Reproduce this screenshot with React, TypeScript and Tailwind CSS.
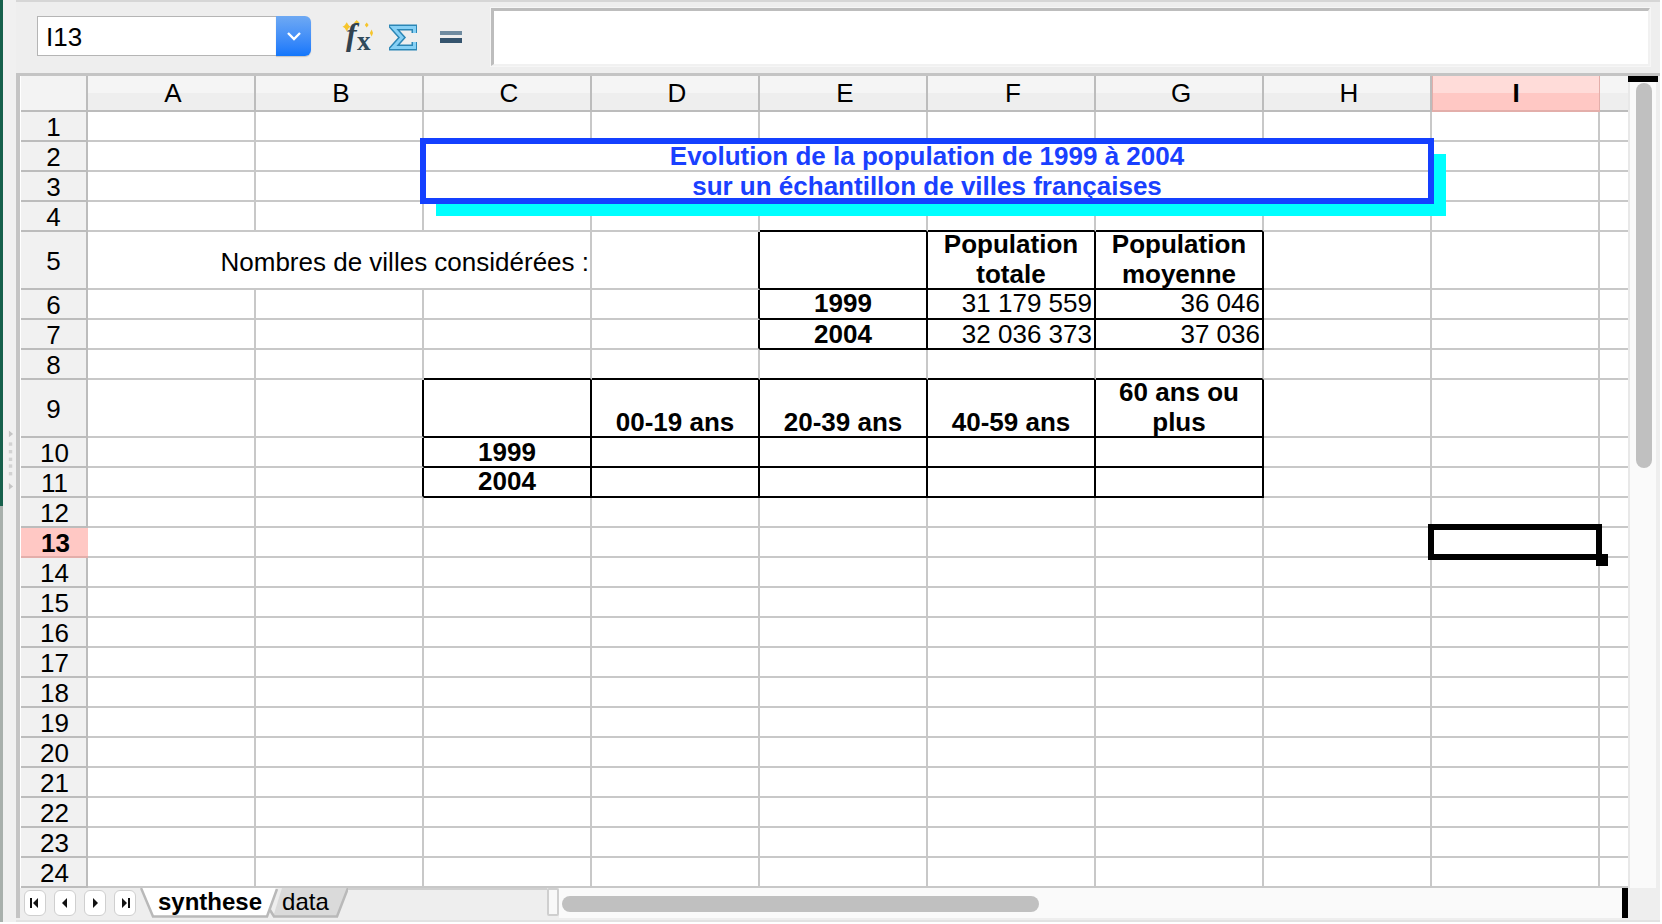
const COLUMNS = ["A", "B", "C", "D", "E", "F", "G", "H", "I"]
const ROWS = Array.from({ length: 24 }, (_, i) => i + 1)

type Cell = { text: string; align: "center" | "right" | "bottom"; bold?: boolean }

const CELLS: Record<string, Cell> = {
  F5: { text: "Population\ntotale", align: "center", bold: true },
  G5: { text: "Population\nmoyenne", align: "center", bold: true },
  E6: { text: "1999", align: "center", bold: true },
  F6: { text: "31 179 559", align: "right" },
  G6: { text: "36 046", align: "right" },
  E7: { text: "2004", align: "center", bold: true },
  F7: { text: "32 036 373", align: "right" },
  G7: { text: "37 036", align: "right" },
  D9: { text: "00-19 ans", align: "bottom", bold: true },
  E9: { text: "20-39 ans", align: "bottom", bold: true },
  F9: { text: "40-59 ans", align: "bottom", bold: true },
  G9: { text: "60 ans ou\nplus", align: "center", bold: true },
  C10: { text: "1999", align: "center", bold: true },
  C11: { text: "2004", align: "center", bold: true },
}

// the two black tables sit on the grid lines, so they are just cell borders
function rightBorder(col: number, row: number) {
  if (row >= 5 && row <= 7 && col >= 3 && col <= 6) return "border-r-black"
  if (row >= 9 && row <= 11 && col >= 1 && col <= 6) return "border-r-black"
  return "border-r-[#c8c8c8]"
}

function bottomBorder(col: number, row: number) {
  if (row >= 4 && row <= 7 && col >= 4 && col <= 6) return "border-b-black"
  if (row >= 8 && row <= 11 && col >= 2 && col <= 6) return "border-b-black"
  return "border-b-[#c8c8c8]"
}

function GridCell({ col, row }: { col: number; row: number }) {
  const cell = CELLS[COLUMNS[col] + row]
  const base = `border-r-2 border-b-2 bg-white text-black ${rightBorder(col, row)} ${bottomBorder(col, row)}`
  if (!cell) return <div className={base} />
  const place =
    cell.align === "right"
      ? "items-center justify-end pr-[2px]"
      : cell.align === "bottom"
      ? "items-end justify-center"
      : "items-center justify-center text-center"
  const nudge = cell.align !== "bottom" && (row === 5 || row === 6 || row === 9 || row === 11) ? "pb-[2px]" : ""
  const leading = cell.align === "bottom" ? "leading-[27px]" : "leading-[30px]"
  return (
    <div className={`${base} flex ${place} ${nudge} ${cell.bold ? "font-bold" : ""}`}>
      <span className={`whitespace-pre-line text-center ${leading}`}>{cell.text}</span>
    </div>
  )
}

function ColumnHeader({ label, selected }: { label: string; selected?: boolean }) {
  if (selected) {
    return (
      <div className="flex items-center justify-center border-x border-b-2 border-[#e3aeaa] bg-[linear-gradient(#ffdcd9_0_50%,#ffc8c4_50%)] font-bold text-black">
        {label}
      </div>
    )
  }
  return (
    <div className="flex items-center justify-center border-r-2 border-b-2 border-[#bcbcbc] bg-[linear-gradient(#f5f5f5_0_50%,#eeeeee_50%)] pl-[4px] text-black">
      {label}
    </div>
  )
}

function RowHeader({ row }: { row: number }) {
  const indent = row >= 10 ? "pl-[2px]" : ""
  if (row === 13) {
    return (
      <div className={`ml-px flex items-center justify-center border-b-2 border-[#e3aeaa] bg-[#ffc8c4] pt-[2px] font-bold text-black ${indent}`}>
        {row}
      </div>
    )
  }
  return (
    <div className={`ml-px flex items-center justify-center border-r-2 border-b-2 border-[#bcbcbc] bg-[#f1f1f1] pt-[2px] text-black ${indent}`}>
      {row}
    </div>
  )
}

function FxIcon() {
  return (
    <svg width="31" height="34" viewBox="0 0 31 34" className="mt-[12px] ml-[31px] shrink-0 overflow-visible">
      <g fill="#f6c52c">
        <path d="M4.7 2.2 7.5 6.7 4.7 11.2 1.9 6.7Z" />
        <path d="M0.5 6.7 4.7 4.6 8.9 6.7 4.7 8.8Z" />
        <path d="M14.7 0 16.7 2.3 14.7 4.8 12.7 2.3Z" />
        <path d="M11.8 2.3 14.7 1.3 17.6 2.3 14.7 3.4Z" />
        <path d="M24.7 2.5 26.6 5 24.7 7.5 22.8 5Z" />
        <path d="M29.7 9.5 31 13 29.7 16.5 27.8 13Z" />
      </g>
      <text x="4" y="25" fontFamily="Liberation Serif" fontStyle="italic" fontWeight="700" fontSize="32" fill="#31424f">
        f
      </text>
      <text x="15" y="30" fontFamily="Liberation Serif" fontWeight="700" fontSize="27" fill="#2f4a5c">
        x
      </text>
    </svg>
  )
}

function SigmaIcon() {
  const d = "M25.5 9V3.5H4L13 13.5 4 23.5H25.5V18"
  return (
    <svg width="28" height="27" viewBox="0 0 28 27" className="mt-[16px] ml-[16px] shrink-0">
      <path d={d} fill="none" stroke="#2b86b5" strokeWidth="6" />
      <path d={d} fill="none" stroke="#86d0f5" strokeWidth="3" />
    </svg>
  )
}

function EqualsIcon() {
  return (
    <svg width="22" height="12" viewBox="0 0 22 12" className="mt-[23px] ml-[23px] shrink-0">
      <rect x="0" y="0" width="22" height="4" fill="#6f8ba0" />
      <rect x="0" y="7" width="22" height="5" fill="#35546e" />
    </svg>
  )
}

function Toolbar() {
  return (
    <div className="flex h-[73px] items-start border-t-2 border-[#d6d6d6] bg-[#eeeeee] pt-[6px] pl-[21px]">
      <div className="mt-[8px] flex h-[40px] w-[274px] shrink-0">
        <div className="flex flex-1 items-center border border-r-0 border-[#b5b5b5] bg-white pt-[2px] pl-[8px] text-[26px] text-black">
          I13
        </div>
        <div className="flex w-[35px] items-center justify-center rounded-r-[6px] bg-gradient-to-b from-[#6ea9f3] to-[#1176fb] shadow-[0_1px_1px_#c4c4c4]">
          <svg width="16" height="10" viewBox="0 0 16 10">
            <path d="M2 2l6 6 6-6" fill="none" stroke="#fff" strokeWidth="2.4" />
          </svg>
        </div>
      </div>
      <FxIcon />
      <SigmaIcon />
      <EqualsIcon />
      <div className="ml-[29px] h-[58px] w-[1159px] border-t-[3px] border-r-2 border-b-2 border-l-[3px] border-t-[#bdbdbd] border-r-[#f1f1f1] border-b-[#f1f1f1] border-l-[#bdbdbd] bg-white shadow-[0_0_0_1px_#f6f6f6]" />
    </div>
  )
}

function TitleBox() {
  return (
    <div className="absolute top-[62px] left-[400px] h-[66px] w-[1014px] border-[6px] border-[#1440ff] shadow-[14px_14px_0_-2px_#00ffff]" />
  )
}

function CellCursor() {
  return (
    <div className="absolute top-[448px] left-[1408px] h-[36px] w-[174px] border-[6px] border-black">
      <div className="absolute -right-[12px] -bottom-[12px] h-[12px] w-[12px] bg-black" />
    </div>
  )
}

function Sheet() {
  return (
    <div className="relative grid w-[1608px] grid-cols-[68px_repeat(9,168px)_28px] grid-rows-[36px_repeat(4,30px)_58px_repeat(3,30px)_58px_repeat(15,30px)] bg-white text-[26px]">
      <div className="ml-px border-r-2 border-b-2 border-[#bcbcbc] bg-[#f3f3f3]" />
      {COLUMNS.map(c => (
        <ColumnHeader key={c} label={c} selected={c === "I"} />
      ))}
      <div className="border-b-2 border-[#bcbcbc] bg-[linear-gradient(#f5f5f5_0_50%,#eeeeee_50%)]" />

      {ROWS.map(row => {
        const last = <div key={`end-${row}`} className="border-b-2 border-[#c8c8c8] bg-white" />
        if (row === 2 || row === 3) {
          const line = row === 2 ? "Evolution de la population de 1999 à 2004" : "sur un échantillon de villes françaises"
          return [
            <RowHeader key={row} row={row} />,
            <GridCell key="a" col={0} row={row} />,
            <GridCell key="b" col={1} row={row} />,
            <div
              key="title"
              className="col-span-6 flex items-center justify-center border-b-2 border-[#c8c8c8] bg-white pr-[2px] font-bold text-[#1a40ff]"
            >
              {line}
            </div>,
            <GridCell key="i" col={8} row={row} />,
            last,
          ]
        }
        if (row === 5) {
          return [
            <RowHeader key={row} row={row} />,
            <div
              key="label"
              className="col-span-3 flex items-center justify-end border-r-2 border-b-2 border-[#c8c8c8] bg-white pt-[4px] pr-[1px] text-black"
            >
              Nombres de villes considérées :
            </div>,
            ...COLUMNS.slice(3).map((c, i) => <GridCell key={c} col={i + 3} row={row} />),
            last,
          ]
        }
        return [
          <RowHeader key={row} row={row} />,
          ...COLUMNS.map((c, i) => <GridCell key={c} col={i} row={row} />),
          last,
        ]
      })}

      <TitleBox />
      <CellCursor />
    </div>
  )
}

function VerticalScroll() {
  return (
    <div className="flex w-[32px] flex-col bg-[#eeeeee]">
      <div className="h-[6px] w-[30px] bg-black" />
      <div className="mr-[4px] flex-1 border-l-2 border-[#e8e8e8] bg-[#fafafa] pt-px pl-[6px]">
        <div className="h-[385px] w-[16px] rounded-full bg-[#c0c0c0]" />
      </div>
    </div>
  )
}

const NAV_ICONS = [
  <path key="first" d="M1 1h2v10H1zM9 1v10L4 6z" />,
  <path key="prev" d="M8 1v10L3 6z" />,
  <path key="next" d="M4 1v10l5-5z" />,
  <path key="last" d="M9 1h2v10H9zM3 1v10l5-5z" />,
]

function TabBar() {
  return (
    <div className="flex h-[30px] bg-[#eeeeee]">
      <div className="flex w-[120px] shrink-0 gap-[8px] pt-[2px] pl-[4px]">
        {NAV_ICONS.map((icon, i) => (
          <div
            key={i}
            className="flex h-[26px] w-[22px] items-center justify-center rounded-[6px] border border-[#cfcfcf] bg-white"
          >
            <svg width="12" height="12" viewBox="0 0 12 12" fill="#111">
              {icon}
            </svg>
          </div>
        ))}
      </div>
      <div className="relative h-[30px] w-[208px] shrink-0">
        <svg width="208" height="30" viewBox="0 0 208 30" className="absolute inset-0">
          <path d="M142 0H208L197 29H133Z" fill="#dadada" />
          <path d="M208 0 197 28.5H134L130 22" fill="none" stroke="#b9b9b9" strokeWidth="2.5" />
          <path d="M0 0H137L127 28H13Z" fill="#fff" />
          <path d="M1 0 13 28.5H127L137 1" fill="none" stroke="#b9b9b9" strokeWidth="2.5" />
        </svg>
        <div className="relative flex pt-[2px] pl-[18px] text-[24px] leading-[24px] text-black">
          <span className="font-bold">synthese</span>
          <span className="ml-[20px]">data</span>
        </div>
      </div>
      <div className="w-[199px] shrink-0 border-t-2 border-[#cfcfcf]" />
      <div className="h-[28px] w-[12px] shrink-0 rounded-[2px] border-2 border-[#cfcfcf] bg-[#f8f8f8]" />
      <div className="w-[1063px] shrink-0 bg-[#fafafa] pt-[8px] pl-[3px]">
        <div className="h-[16px] w-[477px] rounded-full bg-[#c0c0c0]" />
      </div>
      <div className="h-[30px] w-[6px] shrink-0 bg-black" />
    </div>
  )
}

function Sash() {
  return (
    <div className="flex w-[16px] shrink-0 bg-[#f0f0f0]">
      <div className="flex w-[3px] flex-col">
        <div className="h-[506px] bg-[#17604c]" />
        <div className="flex-1 bg-[#a8b0ac]" />
      </div>
      <svg width="10" height="72" viewBox="0 0 10 72" className="mt-[425px] ml-[5px]">
        <path d="M1 0l5 4-5 4z" fill="#c4c4c4" />
        <g fill="#d2d2d2">
          <rect x="1" y="14" width="4" height="4" />
          <rect x="1" y="23" width="4" height="4" />
          <rect x="1" y="32" width="4" height="4" />
          <rect x="1" y="40" width="4" height="4" />
          <rect x="1" y="49" width="4" height="4" />
        </g>
        <path d="M1 62l5 4-5 4z" fill="#c4c4c4" />
      </svg>
    </div>
  )
}

export default function App() {
  return (
    <div className="flex h-[924px] w-[1662px] overflow-hidden bg-white [font-family:'Liberation_Sans',Arial,sans-serif]">
      <div className="flex h-[922px]">
        <Sash />
        <div className="flex w-[1644px] flex-col bg-[#eeeeee]">
          <Toolbar />
          <div className="border-t-[3px] border-l-[4px] border-[#c4c4c4]">
            <div className="flex">
              <Sheet />
              <VerticalScroll />
            </div>
            <TabBar />
          </div>
          <div className="mt-[2px] h-[2px] border-t-2 border-[#e2e2e2]" />
        </div>
      </div>
    </div>
  )
}
